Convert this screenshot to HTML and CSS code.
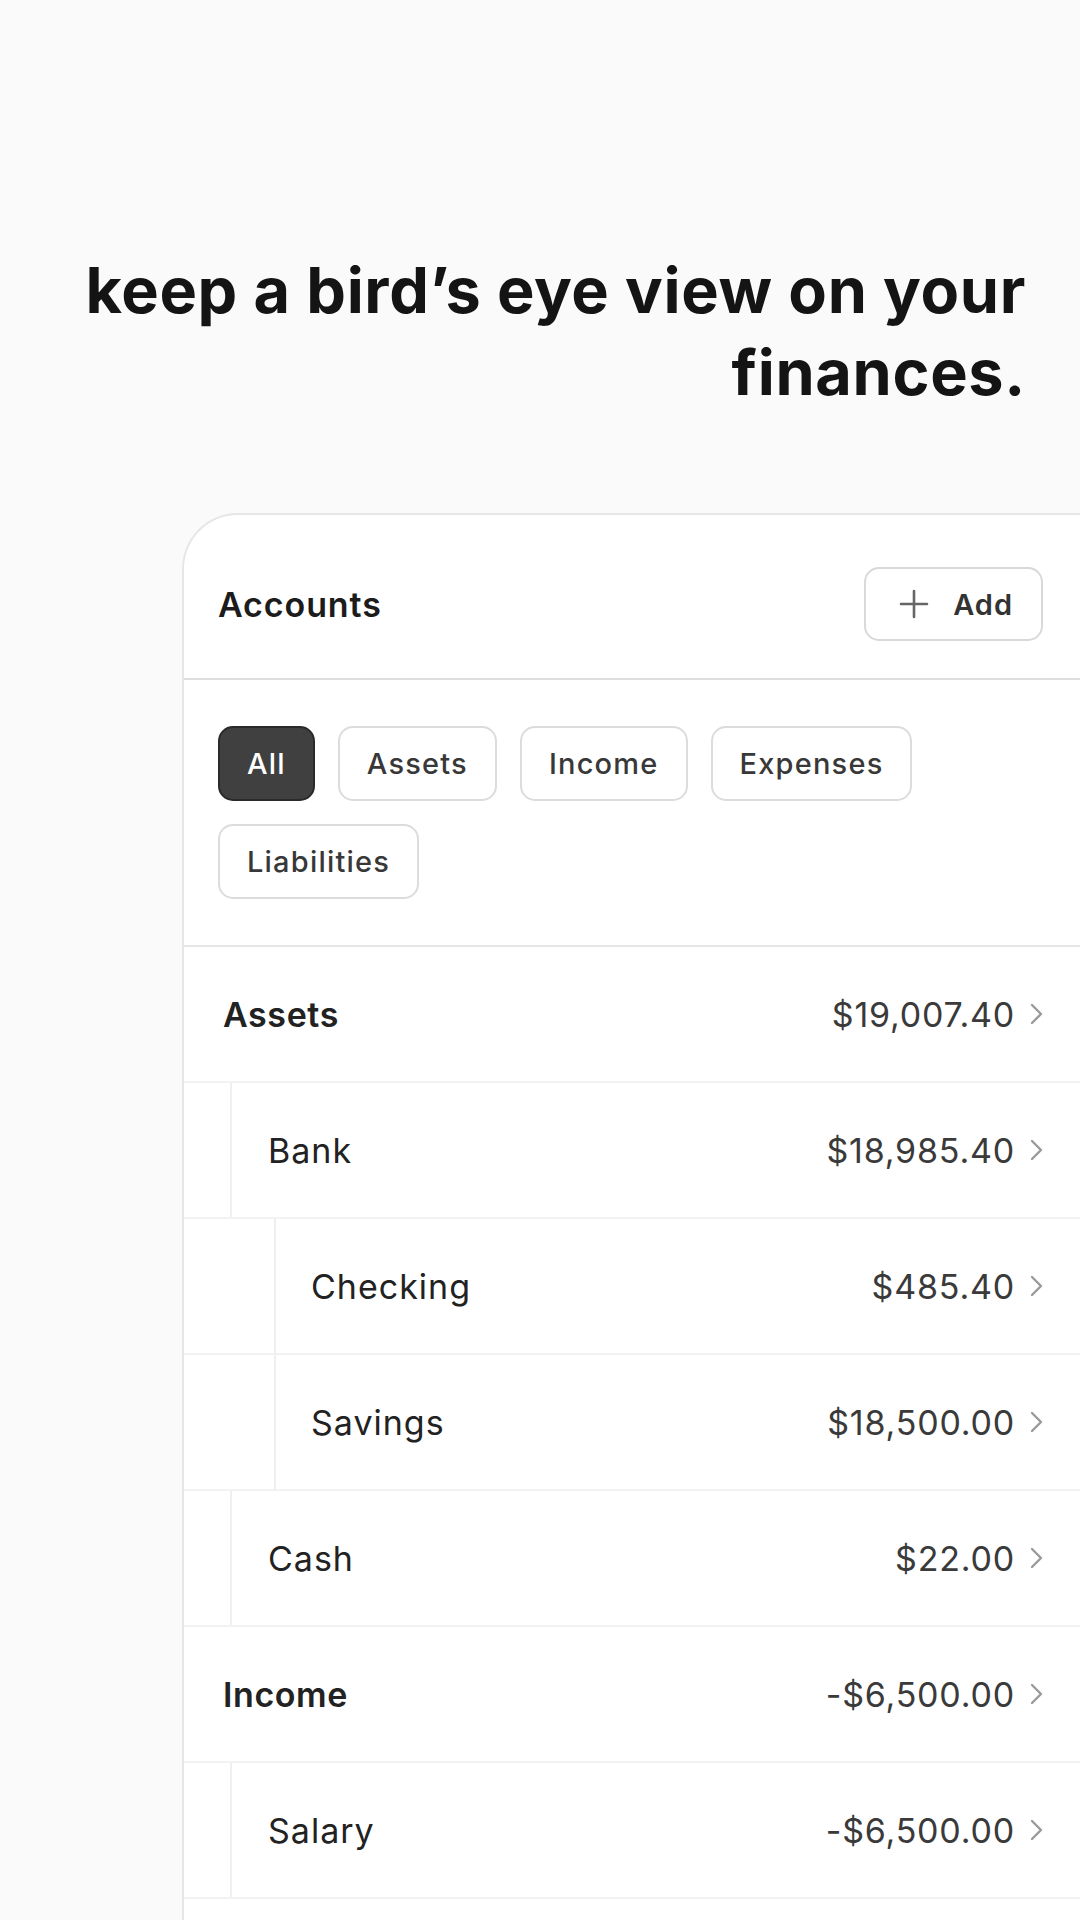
FILE: index.html
```html
<!DOCTYPE html>
<html lang="en">
<head>
<meta charset="utf-8">
<title>Accounts</title>
<link rel="stylesheet" href="styles.css">
</head>
<body>
<section class="hero">
  <h1 class="headline">keep a bird’s eye view on your finances.</h1>
</section>
<main class="card">
  <header class="card-header">
    <h2 class="card-title">Accounts</h2>
    <button class="add-btn">
      <svg class="plus" viewBox="0 0 30 30" width="30" height="30"><path d="M15 2v26M2 15h26" stroke="#666" stroke-width="2.6" stroke-linecap="round" fill="none"/></svg>
      <span>Add</span>
    </button>
  </header>
  <div class="filters">
    <button class="chip active">All</button>
    <button class="chip">Assets</button>
    <button class="chip">Income</button>
    <button class="chip">Expenses</button>
    <button class="chip">Liabilities</button>
  </div>
  <ul class="tree">
    <li class="row lvl0"><div class="row-in"><span class="name group">Assets</span><span class="amount">$19,007.40</span><svg class="chev" viewBox="0 0 16 24" width="16" height="24"><path d="M3 3l9 9-9 9" stroke="#9a9a9a" stroke-width="2.4" fill="none" stroke-linecap="round" stroke-linejoin="round"/></svg></div></li>
    <li class="row lvl1"><div class="row-in"><span class="name">Bank</span><span class="amount">$18,985.40</span><svg class="chev" viewBox="0 0 16 24" width="16" height="24"><path d="M3 3l9 9-9 9" stroke="#9a9a9a" stroke-width="2.4" fill="none" stroke-linecap="round" stroke-linejoin="round"/></svg></div></li>
    <li class="row lvl2"><div class="row-in"><span class="name">Checking</span><span class="amount">$485.40</span><svg class="chev" viewBox="0 0 16 24" width="16" height="24"><path d="M3 3l9 9-9 9" stroke="#9a9a9a" stroke-width="2.4" fill="none" stroke-linecap="round" stroke-linejoin="round"/></svg></div></li>
    <li class="row lvl2"><div class="row-in"><span class="name">Savings</span><span class="amount">$18,500.00</span><svg class="chev" viewBox="0 0 16 24" width="16" height="24"><path d="M3 3l9 9-9 9" stroke="#9a9a9a" stroke-width="2.4" fill="none" stroke-linecap="round" stroke-linejoin="round"/></svg></div></li>
    <li class="row lvl1"><div class="row-in"><span class="name">Cash</span><span class="amount">$22.00</span><svg class="chev" viewBox="0 0 16 24" width="16" height="24"><path d="M3 3l9 9-9 9" stroke="#9a9a9a" stroke-width="2.4" fill="none" stroke-linecap="round" stroke-linejoin="round"/></svg></div></li>
    <li class="row lvl0"><div class="row-in"><span class="name group">Income</span><span class="amount">-$6,500.00</span><svg class="chev" viewBox="0 0 16 24" width="16" height="24"><path d="M3 3l9 9-9 9" stroke="#9a9a9a" stroke-width="2.4" fill="none" stroke-linecap="round" stroke-linejoin="round"/></svg></div></li>
    <li class="row lvl1"><div class="row-in"><span class="name">Salary</span><span class="amount">-$6,500.00</span><svg class="chev" viewBox="0 0 16 24" width="16" height="24"><path d="M3 3l9 9-9 9" stroke="#9a9a9a" stroke-width="2.4" fill="none" stroke-linecap="round" stroke-linejoin="round"/></svg></div></li>
  </ul>
</main>
</body>
</html>
```

FILE: styles.css
```css
* { box-sizing: border-box; }
html, body {
  margin: 0;
  padding: 0;
  height: 1920px;
  overflow: hidden;
}
body {
  background: #fafafa;
  font-family: Inter, "Noto Sans", "Liberation Sans", sans-serif;
  color: #1c1c1c;
}
.hero {
  padding: 249px 54px 0 60px;
}
.headline {
  margin: 0;
  text-align: right;
  font-size: 63px;
  line-height: 82px;
  font-weight: 700;
  letter-spacing: 0.65px;
  color: #141414;
}
.card {
  margin: 100px 0 0 182px;
  background: #fff;
  border: 2px solid #e6e6e6;
  border-right: none;
  border-bottom: none;
  border-top-left-radius: 56px;
  min-height: 1500px;
}
.card-header {
  display: flex;
  align-items: center;
  justify-content: space-between;
  padding: 52px 37px 37px 34px;
  border-bottom: 2px solid #dedede;
}
.card-title {
  margin: 0;
  font-size: 34px;
  font-weight: 600;
  letter-spacing: 0.9px;
  color: #1c1c1c;
}
.add-btn {
  display: flex;
  align-items: center;
  gap: 24px;
  height: 74px;
  padding: 0 28px 0 33px;
  background: #fff;
  border: 2px solid #d9d9d9;
  border-radius: 15px;
  font-family: inherit;
  font-size: 29px;
  font-weight: 600;
  letter-spacing: 1px;
  color: #333;
}
.plus { display: block; }
.filters {
  display: flex;
  flex-wrap: wrap;
  gap: 23px;
  padding: 46px 36px 46px 34px;
  border-bottom: 2px solid #e6e6e6;
}
.chip {
  height: 75px;
  padding: 0 27px;
  background: #fff;
  border: 2px solid #dcdcdc;
  border-radius: 15px;
  font-family: inherit;
  font-size: 29px;
  font-weight: 500;
  letter-spacing: 1.2px;
  color: #383838;
}
.chip.active {
  background: #404040;
  border-color: #2a2a2a;
  color: #fff;
}
.tree {
  list-style: none;
  margin: 0;
  padding: 0;
}
.row {
  height: 136px;
  border-bottom: 2px solid #f2f2f2;
  display: flex;
}
.row-in {
  flex: 1;
  display: flex;
  align-items: center;
  padding-right: 35px;
}
.lvl0 .row-in { padding-left: 39px; }
.lvl1 { padding-left: 46px; }
.lvl2 { padding-left: 90px; }
.lvl1 .row-in, .lvl2 .row-in {
  border-left: 2px solid #efefef;
  padding-left: 36px;
}
.lvl2 .row-in { padding-left: 35px; }
.name {
  flex: 1;
  font-size: 34px;
  font-weight: 400;
  letter-spacing: 1px;
  color: #222;
}
.name.group { font-weight: 600; letter-spacing: 0.6px; }
.amount {
  font-size: 34px;
  letter-spacing: 0.8px;
  color: #3a3a3a;
}
.chev {
  display: block;
  margin-left: 14px;
}
```
